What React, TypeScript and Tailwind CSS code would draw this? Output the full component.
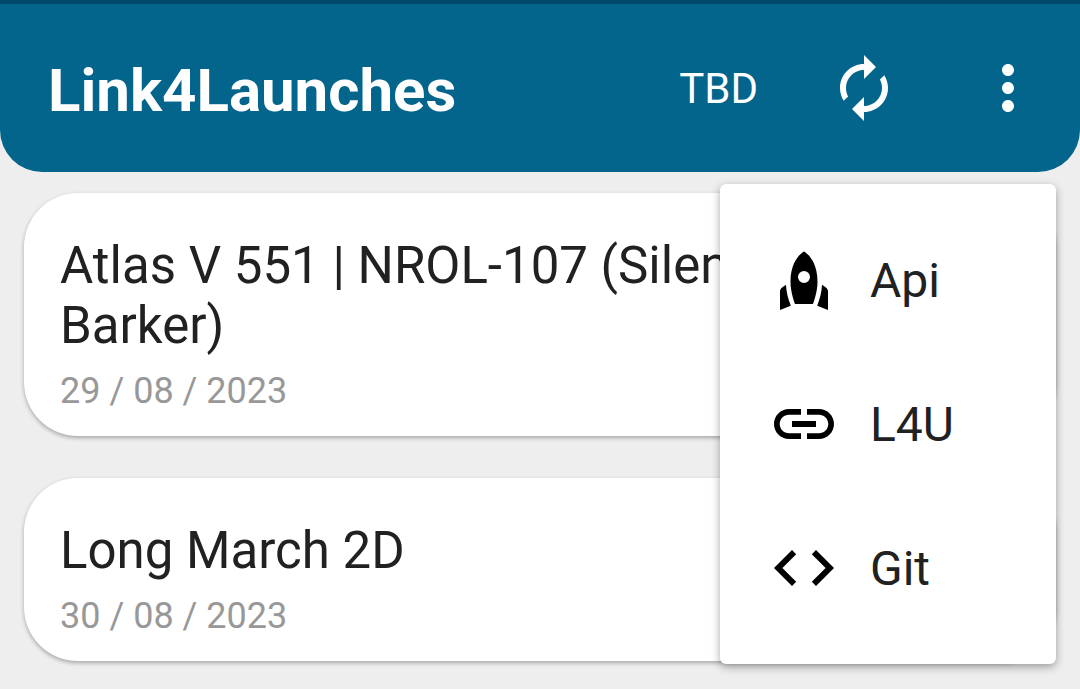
import React from "react";

const launches = [
  { name: "Atlas V 551 | NROL-107 (Silent Barker)", date: "29 / 08 / 2023" },
  { name: "Long March 2D", date: "30 / 08 / 2023" },
];

const RefreshIcon = () => (
  <svg viewBox="0 0 24 24" className="size-[72px]" fill="currentColor" aria-hidden="true">
    <path d="M12 6v3l4-4-4-4v3c-4.420 0-8 3.580-8 8 0 1.570.460 3.030 1.240 4.260L6.700 14.800c-.450-.830-.700-1.790-.700-2.800 0-3.310 2.690-6 6-6zm6.760 1.740L17.300 9.200c.440.840.700 1.790.700 2.800 0 3.310-2.690 6-6 6v-3l-4 4 4 4v-3c4.420 0 8-3.580 8-8 0-1.570-.460-3.030-1.240-4.260z" />
  </svg>
);

const MoreIcon = () => (
  <svg viewBox="0 0 24 24" className="size-[72px]" fill="currentColor" aria-hidden="true">
    <path d="M12 8c1.100 0 2-.900 2-2s-.900-2-2-2-2 .900-2 2 .900 2 2 2zm0 2c-1.100 0-2 .900-2 2s.900 2 2 2 2-.900 2-2-.900-2-2-2zm0 6c-1.100 0-2 .900-2 2s.900 2 2 2 2-.900 2-2-.900-2-2-2z" />
  </svg>
);

const menu = [
  {
    label: "Api",
    icon: (
      <path
        fillRule="evenodd"
        d="M12 2.500C12 2.500 7.500 4.800 7.500 12.500c0 2.800.8 5.500 1.500 7.500h6c.7-2 1.500-4.700 1.500-7.500C16.500 4.800 12 2.500 12 2.500zM12 9a2 2 0 1 1 0 4 2 2 0 0 1 0-4zM6 13.600l-1.300.9c-.4.300-.7.800-.7 1.300V22l3.600-1.450c-.9-2.200-1.500-4.550-1.600-6.950zM18 13.600l1.300.9c.4.300.7.800.7 1.300V22l-3.600-1.450c.9-2.200 1.500-4.550 1.600-6.950z"
      />
    ),
  },
  {
    label: "L4U",
    icon: (
      <path d="M3.900 12c0-1.710 1.390-3.100 3.100-3.100h4V7H7c-2.760 0-5 2.240-5 5s2.240 5 5 5h4v-1.900H7c-1.710 0-3.100-1.390-3.100-3.100zM8 13h8v-2H8v2zm9-6h-4v1.900h4c1.710 0 3.100 1.390 3.100 3.100s-1.390 3.100-3.100 3.100h-4V17h4c2.760 0 5-2.240 5-5s-2.240-5-5-5z" />
    ),
  },
  {
    label: "Git",
    icon: (
      <path d="M9.400 16.600L4.800 12l4.600-4.600L8 6l-6 6 6 6 1.400-1.400zm5.200 0l4.600-4.600-4.600-4.600L16 6l6 6-6 6-1.400-1.400z" />
    ),
  },
];

export default function App() {
  return (
    <div className="min-h-screen bg-[#eeeeee] font-[Roboto,sans-serif]">
      <header className="relative flex h-[172px] items-center rounded-b-[42px] border-t-4 border-[#00496a] bg-[#03658c] pr-9 pl-12 text-white">
        <h1 className="flex-1 pt-1.5 text-[60px] leading-[72px] font-bold">Link4Launches</h1>
        <button type="button" className="pt-0.5 pr-[70px] pl-12 text-[42px] leading-[48px]">TBD</button>
        <button type="button" aria-label="Refresh"><RefreshIcon /></button>
        <button type="button" aria-label="More options" className="ml-[72px]"><MoreIcon /></button>
        <nav className="absolute top-[180px] right-6 z-10 flex w-[336px] flex-col rounded-md bg-white py-6 text-[#212121] shadow-[0_3px_8px_rgba(0,0,0,0.35)]">
          {menu.map((item) => (
            <button key={item.label} type="button" className="flex h-36 items-center gap-[30px] pl-12 text-left text-[48px]">
              <svg viewBox="0 0 24 24" className="size-[72px] text-black" fill="currentColor" aria-hidden="true">
                {item.icon}
              </svg>
              <span className="pt-0.5">{item.label}</span>
            </button>
          ))}
        </nav>
      </header>
      <main className="flex flex-col gap-[42px] px-6 pt-[21px]">
        {launches.map((l) => (
          <article key={l.name} className="rounded-[54px] bg-white px-9 pt-[43px] pb-[22px] shadow-[0_2px_4px_rgba(0,0,0,0.3)]">
            <h2 className="max-w-[760px] text-[51px] leading-[60px] text-[#212121]">{l.name}</h2>
            <p className="pt-[13px] text-[36px] leading-[45px] text-[#989898]">{l.date}</p>
          </article>
        ))}
      </main>
    </div>
  );
}
